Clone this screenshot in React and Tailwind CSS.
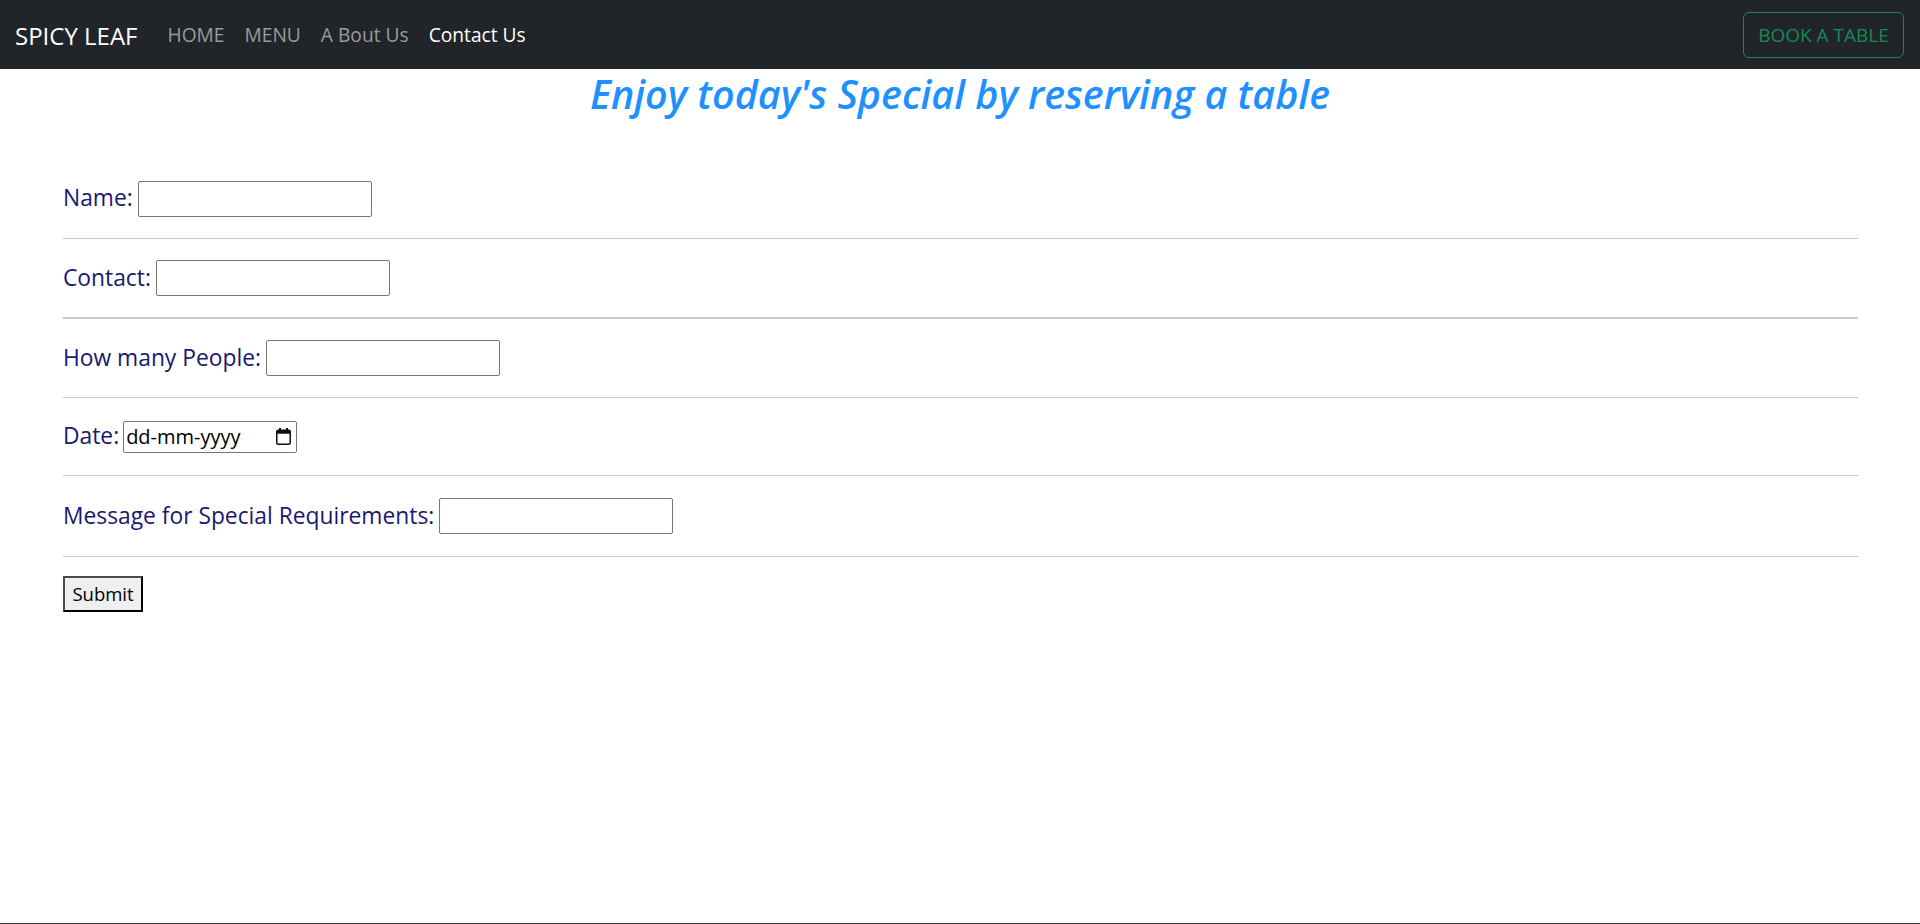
import React from "react";

const FONT = { fontFamily: '"Segoe UI", "Open Sans", "Noto Sans", sans-serif' };

function CalendarIcon() {
  return (
    <svg width="15" height="17" viewBox="0 0 15 17" className="block">
      <rect x="3" y="0" width="2" height="3" fill="#111" />
      <rect x="10" y="0" width="2" height="3" fill="#111" />
      <rect x="0.75" y="2.25" width="13.5" height="14" rx="1.5" fill="none" stroke="#111" strokeWidth="1.5" />
      <rect x="0.75" y="2.25" width="13.5" height="3.5" fill="#111" />
    </svg>
  );
}

function Row({ label, children, h = "h-[79px]" }) {
  return (
    <div className={`${h} flex items-center`}>
      <span className="text-[22.8px] text-[#191970] whitespace-nowrap">{label}</span>
      {children}
    </div>
  );
}

function TextBox({ w = "w-[234px]" }) {
  return (
    <input
      type="text"
      className={`${w} h-[36px] ml-[5px] border border-[#767676] rounded-[2px] bg-white outline-none`}
    />
  );
}

export default function App() {
  return (
    <div className="h-[924px] bg-white border-b border-[#3c3c3c] overflow-hidden" style={FONT}>
      <nav className="h-[69px] bg-[#212529] flex items-center pl-[15px] pr-[16px]">
        <span className="text-[24px] text-white mr-[20px] whitespace-nowrap pt-[2px]">SPICY LEAF</span>
        <div className="flex items-center text-[19.2px] pt-[2px]">
          <a className="px-[10px] text-[rgba(255,255,255,0.55)]">HOME</a>
          <a className="px-[10px] text-[rgba(255,255,255,0.55)]">MENU</a>
          <a className="px-[10px] text-[rgba(255,255,255,0.55)]">A Bout Us</a>
          <a className="px-[10px] text-white">Contact Us</a>
        </div>
        <button className="ml-auto w-[161px] h-[46px] border border-[#198754] rounded-[6px] text-[#198754] text-[19px] flex items-center justify-center pt-[2px]">
          BOOK A TABLE
        </button>
      </nav>

      <div className="h-[52px] flex items-center justify-center">
        <h2 className="text-[39.5px] font-semibold italic text-[#1e90ff] leading-none whitespace-nowrap">
          Enjoy today's Special by reserving a table
        </h2>
      </div>

      <form className="pl-[63px] pr-[62px] mt-[38px]">
        <Row label="Name:">
          <TextBox />
        </Row>
        <hr className="border-0 border-t border-[#c6c6dc]" />
        <Row label="Contact:" h="h-[78px]">
          <TextBox />
        </Row>
        <hr className="border-0 border-t-2 border-[#c6c6dc]" />
        <Row label="How many People:" h="h-[78px]">
          <TextBox />
        </Row>
        <hr className="border-0 border-t border-[#c6c6dc]" />
        <Row label="Date:" h="h-[77px]">
          <div className="ml-[4px] w-[174px] h-[32px] border border-[#767676] rounded-[2px] flex items-center pl-[2px] pr-[5px]">
            <span className="text-[20px] text-black">dd-mm-yyyy</span>
            <span className="ml-auto">
              <CalendarIcon />
            </span>
          </div>
        </Row>
        <hr className="border-0 border-t border-[#c6c6dc]" />
        <Row label="Message for Special Requirements:" h="h-[80px]">
          <TextBox />
        </Row>
        <hr className="border-0 border-t border-[#c6c6dc]" />
        <button
          type="button"
          className="mt-[19px] w-[80px] h-[36px] bg-[#efefef] border-2 border-[#4a4a4a] border-r-black border-b-black text-[18.5px] text-black flex items-center justify-center"
        >
          Submit
        </button>
      </form>
    </div>
  );
}
